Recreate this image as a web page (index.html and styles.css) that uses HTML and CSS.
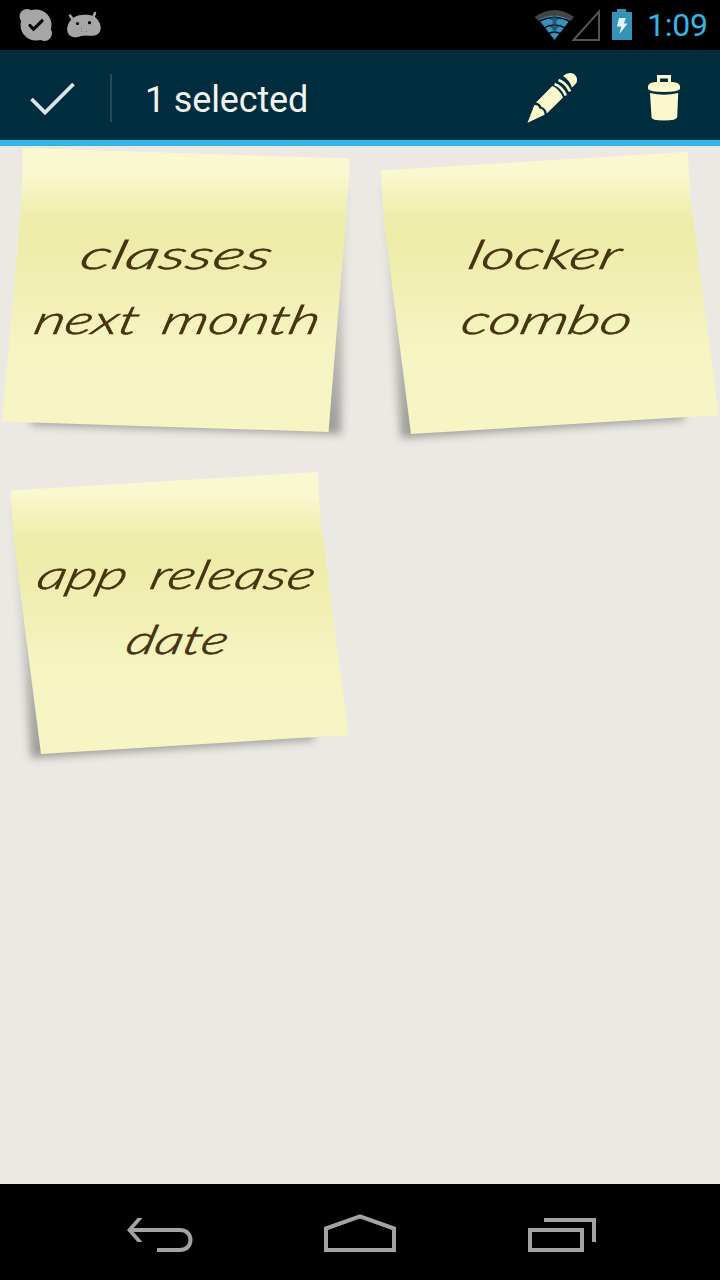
FILE: index.html
```html
<!DOCTYPE html>
<html lang="en">
<head>
<meta charset="utf-8">
<title>Notes</title>
<link rel="stylesheet" href="styles.css">
</head>
<body>
<div class="screen">
  <header class="status">
    <svg class="status-left" viewBox="0 0 120 50">
      <g fill="#a6a6a6"><circle cx="36" cy="25" r="15.500"/><circle cx="27" cy="16.500" r="7.500"/><circle cx="44.500" cy="33.500" r="7.500"/></g>
      <path d="M30 25.500l3.500 3.800 8.500-8.500" fill="none" stroke="#000" stroke-width="3.200" stroke-linecap="round"/>
      <path d="M72 19c4-5 21-6 25 0 4 4 5 11 2 14-4 4-9 2.500-14 2.500-4 0-7 2.500-12 1.500-8-2-7-13-1-18z" fill="#a6a6a6"/>
      <path d="M70 15.500l3.500 5M95 13l-2 5" stroke="#a6a6a6" stroke-width="2.600" stroke-linecap="round"/>
      <circle cx="77.500" cy="23.500" r="1.600"/><circle cx="89.500" cy="22.700" r="1.600"/>
      <path d="M81 28.500h1M86 31.500h1M81 31.500h1" stroke="#777"/>
    </svg>
    <svg class="status-right" viewBox="530 0 112 50">
      <path d="M534.700 17q20-14 39.400 0l-4 4.500q-15.500-9-31 0z" fill="#444"/>
      <path d="M539 20q15.500-9 31 0L554.500 40z" fill="#3593bd"/>
      <path d="M538 22q16.500-9 33 0M543.500 28q11-6 22 0M548 34q6.500-4 13 0" fill="none" stroke="#000" stroke-width="1.300"/>
      <path d="M554.500 14l4.500 6h-2.500v6h2.500l-4.500 6-4.500-6h2.500v-6h-2.500z" fill="#174c65" opacity=".8"/>
      <path d="M573.500 40L599 11.500V40z" fill="none" stroke="#555" stroke-width="2"/>
      <path d="M612 12h5V9h9v3h6v28h-20z" fill="#3593b8"/>
      <path d="M619 18h7l-2.200 5.500h3.700L619.500 34l1.700-7.500H617z" fill="#e4f1f6"/>
    </svg>
    <span class="clock">1:09</span>
  </header>
  <div class="actionbar">
    <svg class="done" viewBox="0 0 110 90"><path d="M31.500 49L45 62.500 73.500 34" fill="none" stroke="#dce3e6" stroke-width="3.800"/></svg>
    <div class="divider"></div>
    <h1 class="title">1 selected</h1>
    <svg class="tool" viewBox="520 50 64 90">
      <g fill="#fbf8ce">
        <path d="M527.500 122.800L534.200 105.200Q538 104.500 539.500 108.500 544.300 109 544.600 114.800z"/>
        <path d="M536 102.500L552.300 86Q559.500 89 563 97.500L546.800 113.500Q546 108 541.500 107 540 103 536 102.500z"/>
        <path d="M563 76q5.500-4.500 11-2 4.500 3.500 2.500 9l-4.500 4.500q-2.500-7.500-9-11.500z"/>
      </g>
      <path d="M554.500 84Q562.500 87 565.800 95.500M558.500 80Q566.500 83 570 91.500" fill="none" stroke="#fbf8ce" stroke-width="2.600"/>
    </svg>
    <svg class="tool" viewBox="632 50 64 90">
      <g fill="#fbf8ce">
        <path d="M657 83v-8h14v8h-3v-4.500h-8V83z"/>
        <path d="M648 86q1-4 9-4h14q8 0 9 4v3q-2 3-16 3t-16-3z"/>
        <path d="M650 93q14 3.500 28.200 0l-1 24q-.2 3.500-13.200 3.500T651.500 117z"/>
      </g>
    </svg>
  </div>
  <svg class="defs" width="0" height="0">
    <defs>
      <linearGradient id="paper" gradientUnits="userSpaceOnUse" x1="0" y1="0" x2="0" y2="290">
        <stop offset="0" stop-color="#faf8d0"/><stop offset=".095" stop-color="#faf8cf"/>
        <stop offset=".24" stop-color="#efedad"/><stop offset=".3" stop-color="#eeeca8"/>
        <stop offset=".44" stop-color="#f0eeb0"/><stop offset=".68" stop-color="#f6f4c1"/><stop offset="1" stop-color="#f7f5c4"/>
      </linearGradient>
      <linearGradient id="shade" gradientUnits="userSpaceOnUse" x1="0" y1="20" x2="0" y2="290">
        <stop offset="0" stop-opacity=".04"/><stop offset=".5" stop-opacity=".14"/><stop offset="1" stop-opacity=".34"/>
      </linearGradient>
      <filter id="soft" x="-20%" y="-20%" width="140%" height="140%"><feGaussianBlur stdDeviation="4"/></filter>
      <g id="lean-left">
        <path d="M100 40H346L341 288 30 279z" fill="url(#shade)" filter="url(#soft)"/>
        <path d="M23 2L349.500 12.500Q347 85 342 120L328.500 286 2 275.500 19 85Q22 50 23 2z" fill="url(#paper)"/>
      </g>
      <g id="lean-right">
        <path d="M13 40H250L315 274 31 292z" fill="url(#shade)" filter="url(#soft)"/>
        <path d="M11 24.500L318 6Q319 48 325 86L348.500 269 41 288 16 92Q12 60 11 24.500z" fill="url(#paper)"/>
      </g>
    </defs>
  </svg>
  <main class="notes">
    <svg class="note" viewBox="0 0 350 300">
      <use href="#lean-left"/>
      <g class="hand">
        <text transform="translate(78 122.500) skewX(-14)" textLength="191" lengthAdjust="spacingAndGlyphs">classes</text>
        <text transform="translate(32 188) skewX(-14)" textLength="285" lengthAdjust="spacingAndGlyphs">next month</text>
      </g>
    </svg>
    <svg class="note" viewBox="0 0 350 300">
      <use href="#lean-right"/>
      <g class="hand">
        <text transform="translate(96 122.500) skewX(-14)" textLength="152" lengthAdjust="spacingAndGlyphs">locker</text>
        <text transform="translate(89 188) skewX(-14)" textLength="170" lengthAdjust="spacingAndGlyphs">combo</text>
      </g>
    </svg>
    <svg class="note" viewBox="0 0 350 300">
      <use href="#lean-right"/>
      <g class="hand">
        <text transform="translate(35 122.500) skewX(-14)" textLength="277" lengthAdjust="spacingAndGlyphs">app release</text>
        <text transform="translate(124 188) skewX(-14)" textLength="101" lengthAdjust="spacingAndGlyphs">date</text>
      </g>
    </svg>
  </main>
  <nav class="navbar">
    <svg viewBox="110 1184 500 96" fill="none" stroke="#a3a3a3" stroke-width="4">
      <path d="M130 1230h50c14 0 14 20 0 20h-23"/>
      <path d="M127 1230l10.500-12h5L132 1230l10.500 12h-5z" fill="#a3a3a3" stroke="none"/>
      <path d="M326 1228.500L360 1216.300l34 12.200V1250h-68z"/>
      <path d="M530 1230h52v20h-52zM544 1220h50v22"/>
    </svg>
  </nav>
</div>
</body>
</html>
```
FILE: styles.css
```css
body { margin: 0; }
svg { display: block; }
.screen { width: 720px; height: 1280px; display: flex; flex-direction: column; background: #ece9e4; overflow: hidden; font-family: Roboto, sans-serif; }
.status { height: 50px; flex: none; display: flex; align-items: center; background: #000; }
.status-left { width: 120px; height: 50px; }
.status-right { width: 112px; height: 50px; margin-left: auto; }
.clock { width: 73px; margin-left: 5px; line-height: 50px; font-size: 32px; letter-spacing: -.2px; color: #33b5e5; box-sizing: border-box; }
.actionbar { height: 96px; flex: none; box-sizing: border-box; display: flex; align-items: center; background: #002d3d; border-bottom: 6px solid #33b5e5; padding-right: 24px; }
.done { width: 110px; height: 90px; }
.divider { width: 2px; height: 48px; margin-top: 6px; background: #26495a; }
.title { flex: 1; margin: 10px 0 0 33px; font-size: 36px; letter-spacing: -.15px; line-height: 42px; font-weight: 400; color: #f3f3f3; }
.tool { width: 64px; height: 90px; }
.tool + .tool { margin-left: 48px; }
.defs { position: absolute; }
.notes { flex: 1; display: grid; grid-template-columns: 350px 350px; grid-auto-rows: 300px; gap: 20px; }
.note { width: 350px; height: 300px; overflow: visible; }
.hand { font-family: Lato, sans-serif; font-weight: 300; font-style: italic; font-size: 40px; word-spacing: 6px; fill: #46330f; stroke: #46330f; stroke-width: .7px; }
.navbar { height: 96px; flex: none; background: #000; padding-left: 110px; }
.navbar svg { width: 500px; height: 96px; }
```
